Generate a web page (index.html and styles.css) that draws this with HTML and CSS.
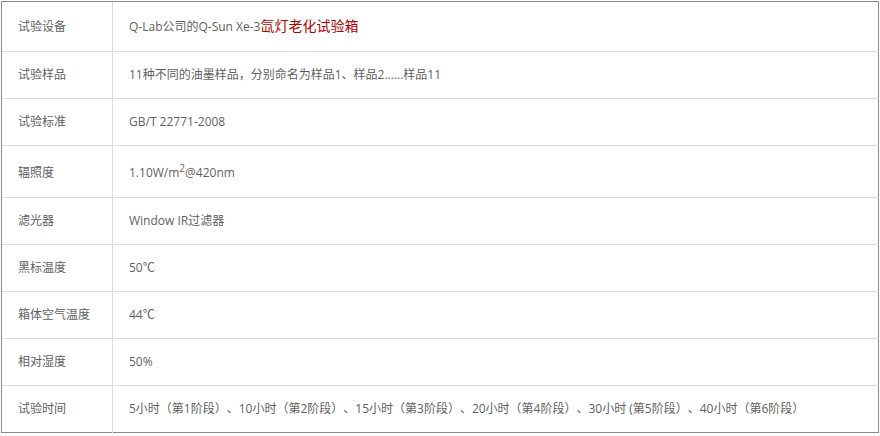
FILE: index.html
```html
<!DOCTYPE html>
<html lang="zh-CN">
<head>
<meta charset="utf-8">
<title>试验参数</title>
<link rel="stylesheet" href="styles.css">
</head>
<body>
<table class="spec">
  <colgroup><col class="c-label"><col class="c-value"></colgroup>
  <tbody>
    <tr class="row-tall">
      <td class="label">试验设备</td>
      <td class="value">Q-Lab公司的Q-Sun Xe-3<span class="hl">氙灯老化试验箱</span></td>
    </tr>
    <tr>
      <td class="label">试验样品</td>
      <td class="value">11种不同的油墨样品，分别命名为样品1、样品2......样品11</td>
    </tr>
    <tr>
      <td class="label">试验标准</td>
      <td class="value">GB/T 22771-2008</td>
    </tr>
    <tr class="row-sup">
      <td class="label">辐照度</td>
      <td class="value">1.10W/m<sup>2</sup>@420nm</td>
    </tr>
    <tr>
      <td class="label">滤光器</td>
      <td class="value">Window IR过滤器</td>
    </tr>
    <tr>
      <td class="label">黑标温度</td>
      <td class="value">50℃</td>
    </tr>
    <tr>
      <td class="label">箱体空气温度</td>
      <td class="value">44℃</td>
    </tr>
    <tr>
      <td class="label">相对湿度</td>
      <td class="value">50%</td>
    </tr>
    <tr>
      <td class="label">试验时间</td>
      <td class="value">5小时（第1阶段）、10小时（第2阶段）、15小时（第3阶段）、20小时（第4阶段）、30小时 (第5阶段）、40小时（第6阶段）</td>
    </tr>
  </tbody>
</table>
</body>
</html>
```

FILE: styles.css
```css
html, body {
  margin: 0;
  padding: 0;
  background: #fff;
}
body {
  padding: 1px 0 0 1px;
  font-family: "Open Sans", "Noto Sans CJK SC", sans-serif;
  font-size: 12px;
  color: #5f5f5f;
  text-spacing-trim: space-all;
}
.spec {
  border-collapse: collapse;
  width: 878px;
  border: 1px solid #8a8a8a;
  table-layout: fixed;
}
.c-label { width: 111px; }
.spec td {
  border-top: 1px solid #dcdcdc;
  border-left: 1px solid #dcdcdc;
  padding: 0 16px;
  height: 46px;
  line-height: 20px;
  vertical-align: middle;
  white-space: nowrap;
}
.spec tr:first-child td { border-top: 1px solid #8a8a8a; }
.spec td:first-child { border-left: 1px solid #8a8a8a; }
.spec .row-tall td { height: 49px; }
.spec .row-sup td { height: 49px; padding-top: 2px; }
.hl {
  color: #b00000;
  font-size: 14px;
}
sup {
  font-size: 10px;
  line-height: 0;
  vertical-align: 5px;
}
```
